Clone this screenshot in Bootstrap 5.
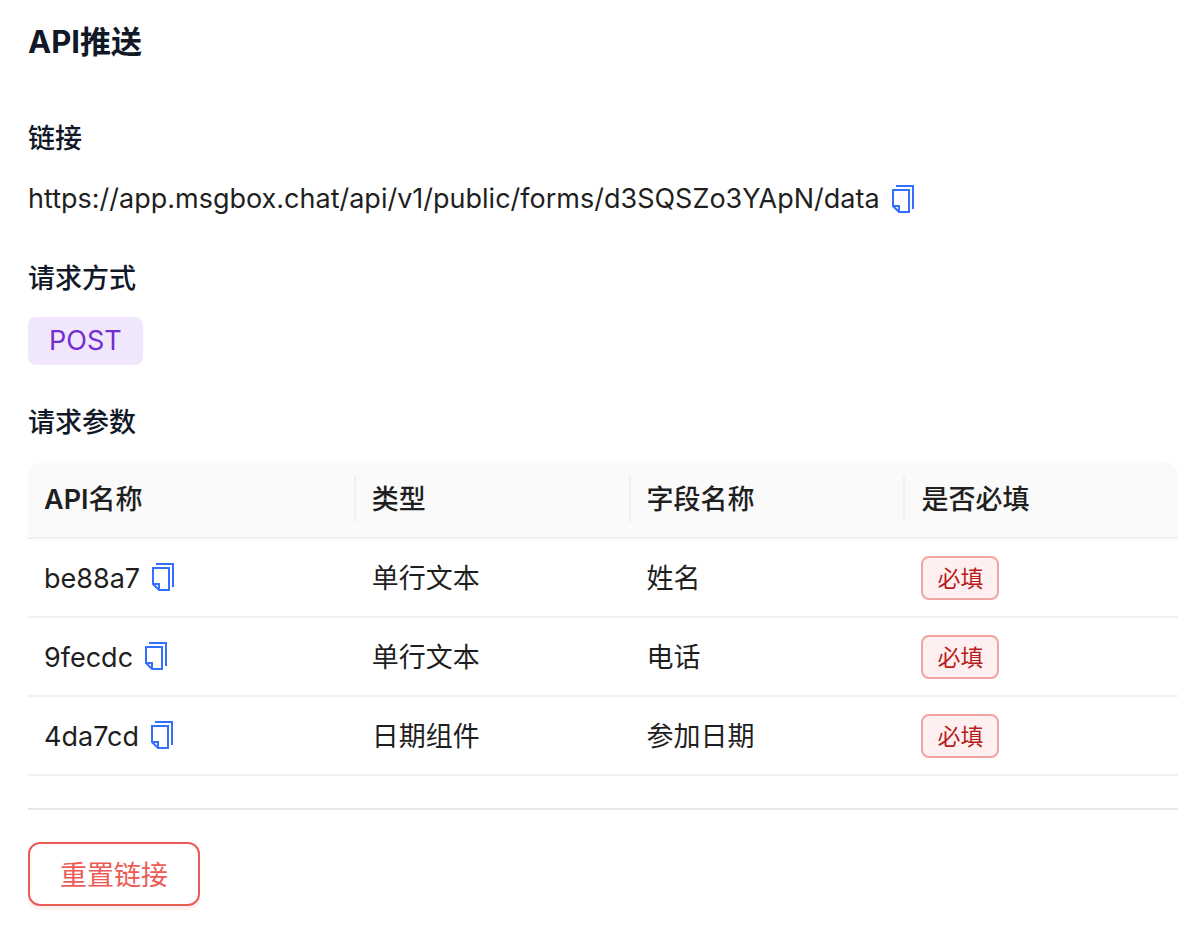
<!DOCTYPE html>
<html lang="zh-CN">
<head>
<meta charset="utf-8">
<meta name="viewport" content="width=device-width, initial-scale=1">
<title>API推送</title>
<link href="https://cdn.jsdelivr.net/npm/bootstrap@5.3.0/dist/css/bootstrap.min.css" rel="stylesheet">
<style>
  body { font-family: Inter, "Noto Sans CJK SC", sans-serif; font-size: 27px; line-height: 44px; color: #1f1f1f; }
  .panel { padding: 20px 0 24px 28px; }
  .page-title { font-size: 31px; line-height: 44px; font-weight: 700; color: #111827; margin-bottom: 53px; }
  .section-title { font-size: 27px; line-height: 44px; font-weight: 500; color: #111827; margin-bottom: 16px; }
  .endpoint, .method-row { margin-bottom: 36px; }
  .copy-btn { color: #3370ff; line-height: 0; }
  .copy-btn svg { display: block; fill: none; stroke: currentColor; stroke-width: 2; }
  .method-tag { background: #f1e7fd; color: #722ed1; line-height: 48px; padding: 0 21px; border-radius: 8px; }
  .params { table-layout: fixed; border-collapse: separate; border-spacing: 0; line-height: 46px; }
  .params th, .params td { padding: 17px 16px 14px; border-bottom: 2px solid #f0f0f0; vertical-align: top; }
  .params th { position: relative; background: #fafafa; font-weight: 600; padding-top: 16px; }
  .params .cjk { font-weight: 500; }
  .params th:first-child { border-top-left-radius: 16px; }
  .params th:last-child { border-top-right-radius: 16px; }
  .params th:not(:last-child)::after { content: ""; position: absolute; right: 0; top: 15px; bottom: 15px; width: 2px; background: #f0f0f0; }
  .params .copy-btn { margin-top: 7px; }
  .required-tag { display: block; width: fit-content; font-size: 23px; line-height: 38px; padding: 2px 14px 0; border: 2px solid #f0a5a0; border-radius: 8px; background: #fef0f0; color: #b91c1c; }
  .divider { margin: 32px 0; border-top: 2px solid #e5e7eb; opacity: 1; }
  .reset-btn { --bs-btn-color: #ec5b56; --bs-btn-border-color: #ec5b56; --bs-btn-hover-bg: #ec5b56; --bs-btn-hover-color: #fff; --bs-btn-border-width: 2px; --bs-btn-border-radius: 12px; font-size: 27px; line-height: 40px; padding: 12px 30px 8px; box-shadow: 0 4px 0 #fff1f0; background: #fff; }
</style>
</head>
<body>
<svg class="d-none" aria-hidden="true">
  <symbol id="copy" viewBox="0 0 22 28">
    <path d="M4 1H21V24"/><path d="M1 5H17V27H7L1 21Z"/><path d="M1 21H7V27"/>
  </symbol>
</svg>
<main class="panel">
  <h1 class="page-title">API推送</h1>

  <section>
    <h2 class="section-title">链接</h2>
    <div class="endpoint d-flex align-items-center">
      <span>https://app.msgbox.chat/api/v1/public/forms/d3SQSZo3YApN/data</span>
      <button type="button" class="copy-btn btn border-0 p-0 ms-2 ps-1" aria-label="复制链接"><svg width="22" height="28"><use href="#copy"/></svg></button>
    </div>
  </section>

  <section>
    <h2 class="section-title">请求方式</h2>
    <div class="method-row d-flex"><span class="method-tag">POST</span></div>
  </section>

  <section>
    <h2 class="section-title">请求参数</h2>
    <table class="params w-100">
      <colgroup><col style="width:28.5%"><col style="width:23.9%"><col style="width:23.9%"><col></colgroup>
      <thead>
        <tr><th scope="col">API<span class="cjk">名称</span></th><th scope="col"><span class="cjk">类型</span></th><th scope="col"><span class="cjk">字段名称</span></th><th scope="col"><span class="cjk">是否必填</span></th></tr>
      </thead>
      <tbody>
        <tr>
          <td><div class="d-flex align-items-start"><span>be88a7</span><button type="button" class="copy-btn btn border-0 p-0 ms-2 ps-1" aria-label="复制 be88a7"><svg width="22" height="28"><use href="#copy"/></svg></button></div></td>
          <td>单行文本</td><td>姓名</td><td><span class="required-tag">必填</span></td>
        </tr>
        <tr>
          <td><div class="d-flex align-items-start"><span>9fecdc</span><button type="button" class="copy-btn btn border-0 p-0 ms-2 ps-1" aria-label="复制 9fecdc"><svg width="22" height="28"><use href="#copy"/></svg></button></div></td>
          <td>单行文本</td><td>电话</td><td><span class="required-tag">必填</span></td>
        </tr>
        <tr>
          <td><div class="d-flex align-items-start"><span>4da7cd</span><button type="button" class="copy-btn btn border-0 p-0 ms-2 ps-1" aria-label="复制 4da7cd"><svg width="22" height="28"><use href="#copy"/></svg></button></div></td>
          <td>日期组件</td><td>参加日期</td><td><span class="required-tag">必填</span></td>
        </tr>
      </tbody>
    </table>
  </section>

  <hr class="divider">
  <button type="button" class="reset-btn btn">重置链接</button>
</main>
<script src="https://cdn.jsdelivr.net/npm/bootstrap@5.3.0/dist/js/bootstrap.bundle.min.js"></script>
</body>
</html>
